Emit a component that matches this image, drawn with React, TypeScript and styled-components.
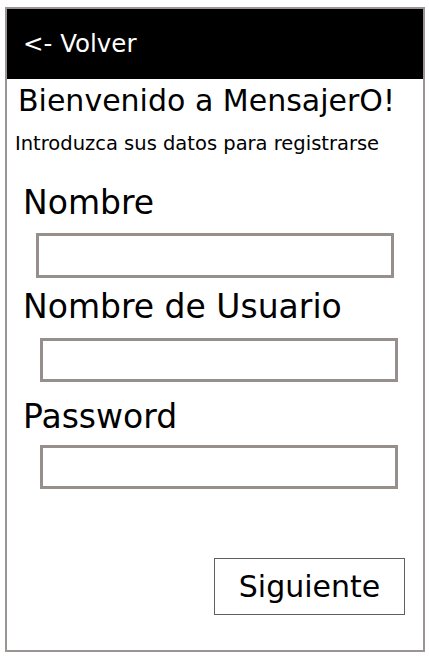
import React from "react";
import styled, { createGlobalStyle } from "styled-components";

const Global = createGlobalStyle`
  html, body { margin: 0; padding: 0; background: #ffffff; }
  body { font-family: "DejaVu Sans", Verdana, sans-serif; color: #000; }
`;

const Frame = styled.div`
  box-sizing: border-box;
  margin: 7px 0 0 5px;
  width: 420px;
  height: 645px;
  border: 2px solid #9a9492;
  display: flex;
  flex-direction: column;
`;

const Header = styled.header`
  height: 70px;
  background: #000;
  display: flex;
  align-items: center;
  padding-left: 16px;
  flex-shrink: 0;
`;

const BackLink = styled.a`
  color: #fff;
  font-size: 24.5px;
  line-height: 28px;
  text-decoration: none;
  cursor: pointer;
`;

const Title = styled.h1`
  margin: 5px 0 0 11px;
  font-size: 30px;
  line-height: 34px;
  font-weight: normal;
  white-space: nowrap;
`;

const Subtitle = styled.p`
  margin: 15px 0 0 8px;
  font-size: 19.5px;
  line-height: 22px;
  white-space: nowrap;
`;

const Form = styled.form`
  display: flex;
  flex-direction: column;
  margin-top: 29px;
  flex: 1;
`;

const Label = styled.label<{ $gap: number }>`
  display: block;
  margin: ${(p) => p.$gap}px 0 0 16px;
  font-size: 33px;
  line-height: 38px;
  white-space: nowrap;
`;

const Input = styled.input<{ $indent: number; $gap: number; $height: number }>`
  box-sizing: border-box;
  display: block;
  margin: ${(p) => p.$gap}px 0 0 ${(p) => p.$indent}px;
  width: 358px;
  height: ${(p) => p.$height}px;
  border: 3px solid #978f8c;
  background: #fff;
  padding: 0 8px;
  font-family: inherit;
  font-size: 20px;
  outline: none;
`;

const Footer = styled.div`
  margin-top: auto;
  display: flex;
  justify-content: flex-end;
  padding: 0 18px 35px 0;
`;

const NextButton = styled.button`
  box-sizing: border-box;
  width: 191px;
  height: 57px;
  border: 1px solid #606060;
  background: #fff;
  font-family: inherit;
  font-size: 30px;
  color: #000;
  cursor: pointer;
  padding: 0;
`;

export default function App() {
  const fields = [
    { label: "Nombre", type: "text", indent: 29, labelGap: 0, inputGap: 11, height: 45 },
    { label: "Nombre de Usuario", type: "text", indent: 33, labelGap: 10, inputGap: 12, height: 44 },
    { label: "Password", type: "password", indent: 33, labelGap: 16, inputGap: 9, height: 44 },
  ];
  return (
    <>
      <Global />
      <Frame>
        <Header>
          <BackLink>&lt;- Volver</BackLink>
        </Header>
        <Title>Bienvenido a MensajerO!</Title>
        <Subtitle>Introduzca sus datos para registrarse</Subtitle>
        <Form onSubmit={(e) => e.preventDefault()}>
          {fields.map((f) => (
            <React.Fragment key={f.label}>
              <Label $gap={f.labelGap}>{f.label}</Label>
              <Input type={f.type} $indent={f.indent} $gap={f.inputGap} $height={f.height} />
            </React.Fragment>
          ))}
          <Footer>
            <NextButton type="submit">Siguiente</NextButton>
          </Footer>
        </Form>
      </Frame>
    </>
  );
}
